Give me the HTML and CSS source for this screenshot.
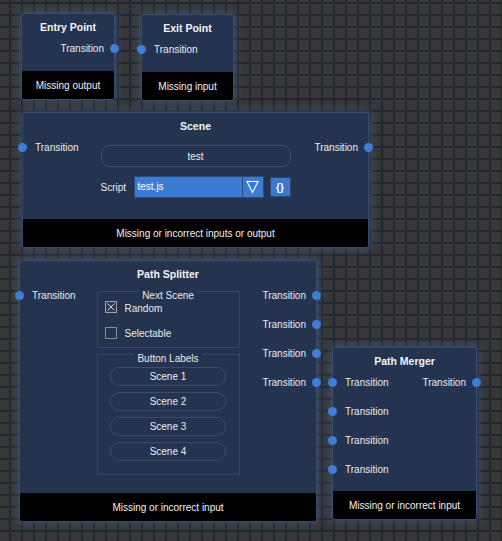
FILE: index.html
```html
<!DOCTYPE html>
<html>
<head>
<meta charset="utf-8">
<link rel="stylesheet" href="styles.css">
</head>
<body>
<div class="canvas">

  <div class="node n-entry">
    <div class="node-title">Entry Point</div>
    <div class="node-body">
      <div class="ports"></div>
      <div></div>
      <div class="ports">
        <div class="port out"><span>Transition</span><i class="dot"></i></div>
      </div>
    </div>
    <div class="node-footer">Missing output</div>
  </div>

  <div class="node n-exit">
    <div class="node-title">Exit Point</div>
    <div class="node-body">
      <div class="ports">
        <div class="port in"><i class="dot"></i><span>Transition</span></div>
      </div>
      <div></div>
      <div class="ports"></div>
    </div>
    <div class="node-footer">Missing input</div>
  </div>

  <div class="node n-scene">
    <div class="node-title">Scene</div>
    <div class="node-body">
      <div class="ports">
        <div class="port in"><i class="dot"></i><span>Transition</span></div>
      </div>
      <div class="scene-center">
        <div class="pill field">test</div>
        <div class="script-row">
          <span class="script-label">Script</span>
          <div class="combo">
            <span class="combo-text">test.js</span>
            <span class="combo-arrow">
              <svg width="13" height="14" viewBox="0 0 13 14"><polygon points="1,1.5 12,1.5 6.5,12.5" fill="none" stroke="#ffffff" stroke-width="1.1"/></svg>
            </span>
          </div>
          <div class="code-btn">{}</div>
        </div>
      </div>
      <div class="ports">
        <div class="port out"><span>Transition</span><i class="dot"></i></div>
      </div>
    </div>
    <div class="node-footer">Missing or incorrect inputs or output</div>
  </div>

  <div class="node n-splitter">
    <div class="node-title">Path Splitter</div>
    <div class="node-body">
      <div class="ports">
        <div class="port in"><i class="dot"></i><span>Transition</span></div>
      </div>
      <div class="split-center">
        <div class="group g-next">
          <div class="legend l-next">Next Scene</div>
          <div class="check-row r1">
            <span class="cb">
              <svg width="12" height="12" viewBox="0 0 12 12"><rect x="0.5" y="0.5" width="11" height="11" fill="#2c3a55" stroke="#a0a0a0"/><path d="M2.5 2.5 L9.5 9.5 M9.5 2.5 L2.5 9.5" stroke="#d0d0d0" stroke-width="1"/></svg>
            </span>
            <span>Random</span>
          </div>
          <div class="check-row r2">
            <span class="cb">
              <svg width="12" height="12" viewBox="0 0 12 12"><rect x="0.5" y="0.5" width="11" height="11" fill="#24334f" stroke="#8c8c8c"/></svg>
            </span>
            <span>Selectable</span>
          </div>
        </div>
        <div class="group g-labels">
          <div class="legend l-labels">Button Labels</div>
          <div class="pill btn">Scene 1</div>
          <div class="pill btn">Scene 2</div>
          <div class="pill btn">Scene 3</div>
          <div class="pill btn">Scene 4</div>
        </div>
      </div>
      <div class="ports">
        <div class="port out"><span>Transition</span><i class="dot"></i></div>
        <div class="port out"><span>Transition</span><i class="dot"></i></div>
        <div class="port out"><span>Transition</span><i class="dot"></i></div>
        <div class="port out"><span>Transition</span><i class="dot"></i></div>
      </div>
    </div>
    <div class="node-footer">Missing or incorrect input</div>
  </div>

  <div class="node n-merger">
    <div class="node-title">Path Merger</div>
    <div class="node-body">
      <div class="ports">
        <div class="port in"><i class="dot"></i><span>Transition</span></div>
        <div class="port in"><i class="dot"></i><span>Transition</span></div>
        <div class="port in"><i class="dot"></i><span>Transition</span></div>
        <div class="port in"><i class="dot"></i><span>Transition</span></div>
      </div>
      <div></div>
      <div class="ports">
        <div class="port out"><span>Transition</span><i class="dot"></i></div>
      </div>
    </div>
    <div class="node-footer">Missing or incorrect input</div>
  </div>

</div>
</body>
</html>
```

FILE: styles.css
```css
* { box-sizing: border-box; }
html, body { margin: 0; padding: 0; }
body {
  width: 502px;
  height: 541px;
  overflow: hidden;
  font-family: "Liberation Sans", Arial, sans-serif;
  font-size: 10px;
  color: #ececec;
}
.canvas {
  position: relative;
  width: 502px;
  height: 541px;
  background-color: #383838;
  background-image:
    linear-gradient(to right, #212834 0, #212834 2px, transparent 2px),
    linear-gradient(to bottom, #212834 0, #212834 2px, transparent 2px);
  background-size: 12px 12px;
  background-position: 9px 2px;
}
.node {
  position: absolute;
  display: flex;
  flex-direction: column;
  background: #24334f;
  border: 1px solid #394c6c;
  border-radius: 3px;
  box-shadow: 0 0 8px 2px rgba(70, 102, 156, 0.45);
}
.n-entry { left: 21px; top: 13px; width: 94px; height: 87px; }
.n-exit { left: 141px; top: 14px; width: 93px; height: 87px; }
.n-scene { left: 22px; top: 112px; width: 347px; height: 136px; }
.n-splitter { left: 19px; top: 260px; width: 298px; height: 262px; }
.n-merger { left: 332px; top: 347px; width: 145px; height: 173px; }

.node-title {
  height: 20px;
  padding-top: 7px;
  line-height: 13px;
  text-align: center;
  font-weight: bold;
  font-size: 10.5px;
  color: #f4f4f4;
}
.node-body {
  flex: 1;
  display: grid;
  grid-template-columns: 1fr auto 1fr;
  align-items: start;
}
.ports { display: flex; flex-direction: column; }
.port {
  height: 29px;
  display: flex;
  align-items: center;
  white-space: nowrap;
}
.port.in { justify-content: flex-start; }
.port.out { justify-content: flex-end; }
.dot {
  display: block;
  width: 9px;
  height: 9px;
  border-radius: 50%;
  background: #3f7dd6;
  flex: none;
}
.port.in .dot { margin-left: -5px; margin-right: 8px; }
.port.out .dot { margin-right: -5px; margin-left: 6px; }

.node-footer {
  height: 28px;
  background: #000;
  display: flex;
  align-items: center;
  justify-content: center;
  border-radius: 0 0 2px 2px;
  color: #f0f0f0;
}

.pill {
  border: 1px solid #3a4c6b;
  border-radius: 9px;
  display: flex;
  align-items: center;
  justify-content: center;
}
.scene-center {
  width: 190px;
  padding-top: 12px;
  display: flex;
  flex-direction: column;
}
.field { height: 22px; }
.script-row {
  margin-top: 9px;
  height: 22px;
  display: flex;
  align-items: center;
}
.script-label { width: 33px; }
.combo {
  width: 130px;
  height: 22px;
  background: #3d7bd3;
  border: 1px solid #2b4a79;
  display: flex;
}
.combo-text {
  flex: 1;
  padding-left: 3px;
  line-height: 20px;
  color: #ffffff;
}
.combo-arrow {
  width: 21px;
  border-left: 1px solid #2b4a79;
  display: flex;
  align-items: center;
  justify-content: center;
}
.combo-arrow svg { display: block; }
.code-btn {
  margin-left: 6px;
  width: 21px;
  height: 20px;
  background: #3b79cf;
  border: 1px solid #2d4670;
  display: flex;
  align-items: center;
  justify-content: center;
  font-weight: bold;
  color: #ffffff;
}

.split-center {
  width: 143px;
  padding-top: 10px;
  display: flex;
  flex-direction: column;
}
.group {
  border: 1px solid #34466a;
  display: flex;
  flex-direction: column;
}
.legend {
  align-self: center;
  margin-top: -1px;
  background: #24334f;
  padding: 0 3px;
  white-space: nowrap;
}
.l-next { height: 10px; line-height: 10px; }
.l-labels { height: 10px; line-height: 10px; }
.g-next { padding-bottom: 7px; }
.g-labels { margin-top: 6px; padding-bottom: 13px; }
.check-row {
  height: 14px;
  display: flex;
  align-items: center;
  padding-left: 7px;
}
.cb { width: 12px; height: 12px; margin-right: 8px; }
.r1 .cb { margin-bottom: 3px; }
.cb svg { display: block; }
.r2 { margin-top: 11px; }
.btn {
  width: 116px;
  height: 19px;
  align-self: center;
  margin-top: 6px;
}
.l-labels + .btn { margin-top: 3px; }
```
